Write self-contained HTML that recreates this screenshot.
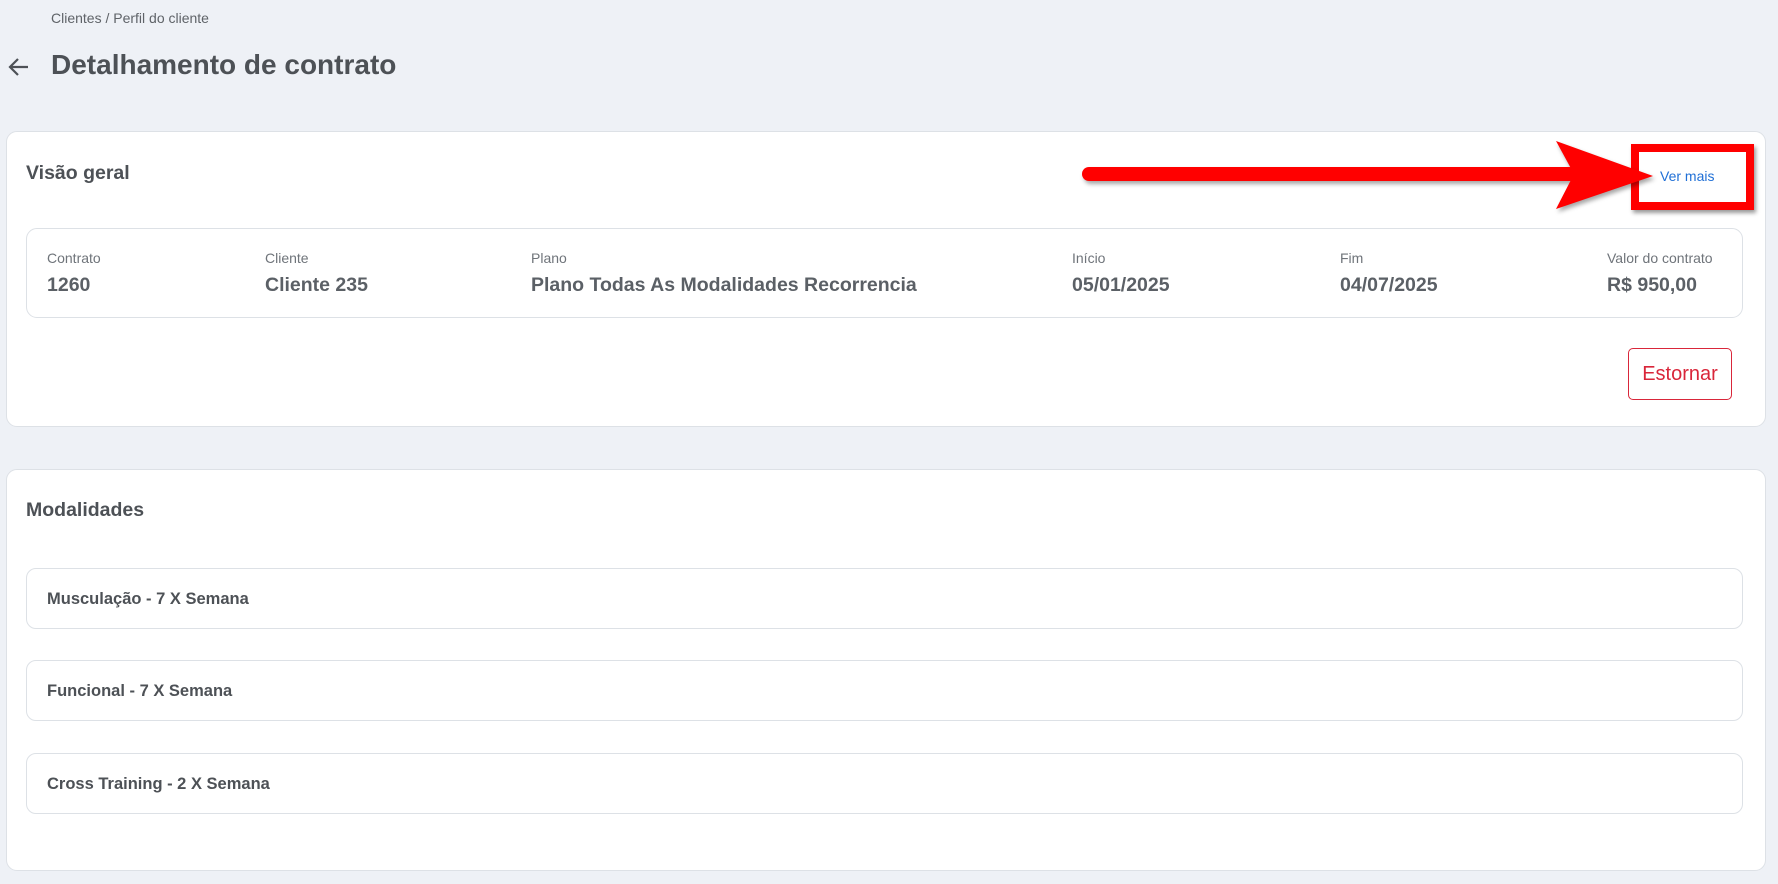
<!DOCTYPE html>
<html><head><meta charset="utf-8"><style>
*{box-sizing:border-box;margin:0;padding:0}
body{width:1778px;height:884px;background:#eef1f6;font-family:"Liberation Sans",sans-serif;position:relative;overflow:hidden;color:#51555a}
.abs{position:absolute}
.card{position:absolute;left:6px;width:1760px;background:#fff;border:1px solid #dde1e6;border-radius:11px}
.lbl{position:absolute;top:250px;font-size:14px;color:#6f747a}
.val{position:absolute;top:274px;font-size:19.5px;font-weight:bold;color:#5b6066}
.row{position:absolute;left:26px;width:1717px;height:61px;border:1px solid #dde1e6;border-radius:10px;background:#fff}
.row span{position:absolute;left:20px;top:21px;font-size:16.5px;font-weight:bold;color:#4d5156}
</style></head><body>
<div class="abs" style="left:51px;top:10px;font-size:14px;color:#5f6368">Clientes / Perfil do cliente</div>
<svg class="abs" style="left:8px;top:56px" width="22" height="22" viewBox="0 0 22 22"><path d="M20 11H3M10 3L2 11l8 8" fill="none" stroke="#4d5156" stroke-width="2.2"/></svg>
<div class="abs" style="left:51px;top:49px;font-size:28px;font-weight:bold;color:#4d5156">Detalhamento de contrato</div>

<div class="card" style="top:131px;height:296px"></div>
<div class="abs" style="left:26px;top:162px;font-size:19.5px;font-weight:bold;color:#4d5156">Visão geral</div>
<div class="abs" style="left:26px;top:228px;width:1717px;height:90px;border:1px solid #dde1e6;border-radius:11px"></div>
<div class="lbl" style="left:47px">Contrato</div><div class="val" style="left:47px">1260</div>
<div class="lbl" style="left:265px">Cliente</div><div class="val" style="left:265px">Cliente 235</div>
<div class="lbl" style="left:531px">Plano</div><div class="val" style="left:531px">Plano Todas As Modalidades Recorrencia</div>
<div class="lbl" style="left:1072px">Início</div><div class="val" style="left:1072px">05/01/2025</div>
<div class="lbl" style="left:1340px">Fim</div><div class="val" style="left:1340px">04/07/2025</div>
<div class="lbl" style="left:1607px">Valor do contrato</div><div class="val" style="left:1607px">R$ 950,00</div>
<div class="abs" style="left:1628px;top:348px;width:104px;height:52px;border:1px solid #d9263a;border-radius:5px;color:#d9263a;font-size:20px;text-align:center;line-height:50px">Estornar</div>

<div class="abs" style="left:1631px;top:144px;width:123px;height:66px;border:8px solid #f00;box-shadow:2px 3px 4px rgba(0,0,0,.4)"></div>
<div class="abs" style="left:1660px;top:168px;font-size:14px;color:#1f6fd6">Ver mais</div>
<svg class="abs" style="left:1080px;top:138px;filter:drop-shadow(2px 3px 2px rgba(0,0,0,.35))" width="580" height="76" viewBox="0 0 580 76"><path d="M9 36H490" stroke="#f00" stroke-width="14" stroke-linecap="round"/><path d="M476 3L573 38L476 71L494 36Z" fill="#f00"/></svg>

<div class="card" style="top:469px;height:402px"></div>
<div class="abs" style="left:26px;top:499px;font-size:19.5px;font-weight:bold;color:#4d5156">Modalidades</div>
<div class="row" style="top:568px"><span>Musculação - 7 X Semana</span></div>
<div class="row" style="top:660px"><span>Funcional - 7 X Semana</span></div>
<div class="row" style="top:753px"><span>Cross Training - 2 X Semana</span></div>
</body></html>
